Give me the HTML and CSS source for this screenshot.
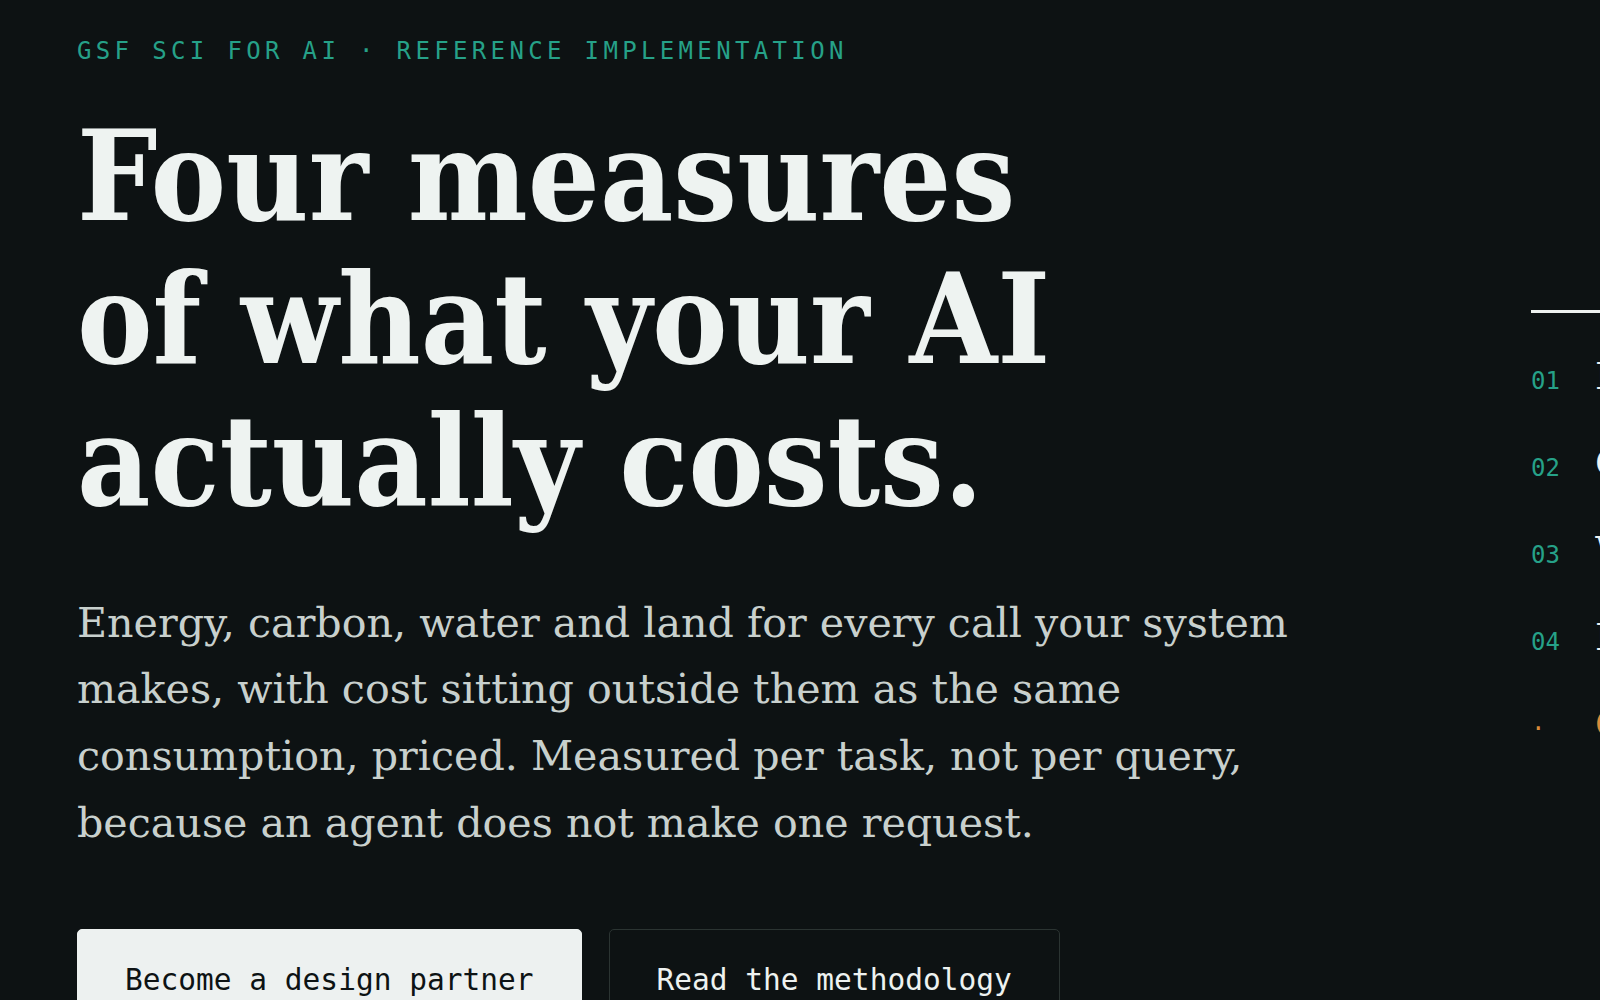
FILE: index.html
```html
<!DOCTYPE html>
<html lang="en">
<head>
<meta charset="utf-8">
<title>GSF SCI for AI · Reference implementation</title>
<link rel="stylesheet" href="styles.css">
</head>
<body>
<main class="hero">
  <div class="hero-copy">
    <p class="eyebrow">GSF SCI for AI · Reference implementation</p>
    <h1 class="title">Four measures<br>of what your AI<br>actually costs.</h1>
    <p class="lede">Energy, carbon, water and land for every call your system<br>makes, with cost sitting outside them as the same<br>consumption, priced. Measured per task, not per query,<br>because an agent does not make one request.</p>
    <div class="actions">
      <a class="btn btn-primary" href="#partner">Become a design partner</a>
      <a class="btn btn-ghost" href="#method">Read the methodology</a>
    </div>
  </div>
  <aside class="measures">
    <ol class="measure-list">
      <li class="measure"><span class="measure-num">01</span><span class="measure-name">Energy</span></li>
      <li class="measure"><span class="measure-num">02</span><span class="measure-name">Carbon</span></li>
      <li class="measure"><span class="measure-num">03</span><span class="measure-name">Water</span></li>
      <li class="measure"><span class="measure-num">04</span><span class="measure-name">Land</span></li>
      <li class="measure measure-cost"><span class="measure-num">·</span><span class="measure-name">Cost</span></li>
    </ol>
  </aside>
</main>
</body>
</html>
```

FILE: styles.css
```css
html, body {
  margin: 0;
  padding: 0;
  background: #0d1213;
  overflow: hidden;
}

body {
  color: #eef2f0;
  font-family: "DejaVu Serif", serif;
  width: 1600px;
  height: 1000px;
}

.hero {
  display: grid;
  grid-template-columns: 1358px 600px;
  column-gap: 96px;
  padding: 35px 0 0 77px;
}

.hero-copy {
  display: flex;
  flex-direction: column;
  align-items: flex-start;
}

.eyebrow {
  margin: 0;
  font-family: "DejaVu Sans Mono", monospace;
  font-size: 24px;
  line-height: 32px;
  letter-spacing: 4.35px;
  text-transform: uppercase;
  color: #26a188;
}

.title {
  margin: 38px 0 0;
  font-family: "DejaVu Serif Condensed", "DejaVu Serif", serif;
  font-stretch: condensed;
  font-weight: 700;
  font-size: 126px;
  line-height: 142.5px;
  letter-spacing: 0;
  color: #eef3f1;
}

.lede {
  margin: 57px 0 0;
  font-family: "DejaVu Serif", serif;
  font-size: 41.2px;
  line-height: 66.7px;
  letter-spacing: 0;
  color: #c8d0cd;
}

.actions {
  display: flex;
  gap: 27px;
  margin-top: 73px;
}

.btn {
  display: inline-block;
  padding: 33px 47px;
  border: 1px solid transparent;
  border-radius: 5px;
  font-family: "DejaVu Sans Mono", monospace;
  font-size: 29.5px;
  line-height: 1.2;
  text-decoration: none;
  white-space: nowrap;
}

.btn-primary {
  background: #edf1f0;
  border-color: #edf1f0;
  color: #0d1314;
}

.btn-ghost {
  background: transparent;
  border-color: #2b3432;
  color: #eef2f0;
}

.measures {
  margin-top: 275px;
  border-top: 3px solid #eef2f0;
  align-self: start;
}

.measure-list {
  list-style: none;
  margin: 0;
  padding: 20px 0 0;
}

.measure {
  display: flex;
  align-items: baseline;
  padding: 22px 0;
}

.measure-num {
  flex: 0 0 64px;
  font-family: "DejaVu Sans Mono", monospace;
  font-size: 24px;
  line-height: 24px;
  color: #26a188;
}

.measure-name {
  font-family: "DejaVu Serif", serif;
  font-size: 38px;
  line-height: 43px;
  color: #eef2f0;
  white-space: nowrap;
}

.measure-cost .measure-num,
.measure-cost .measure-name {
  color: #d98b3a;
}
```
